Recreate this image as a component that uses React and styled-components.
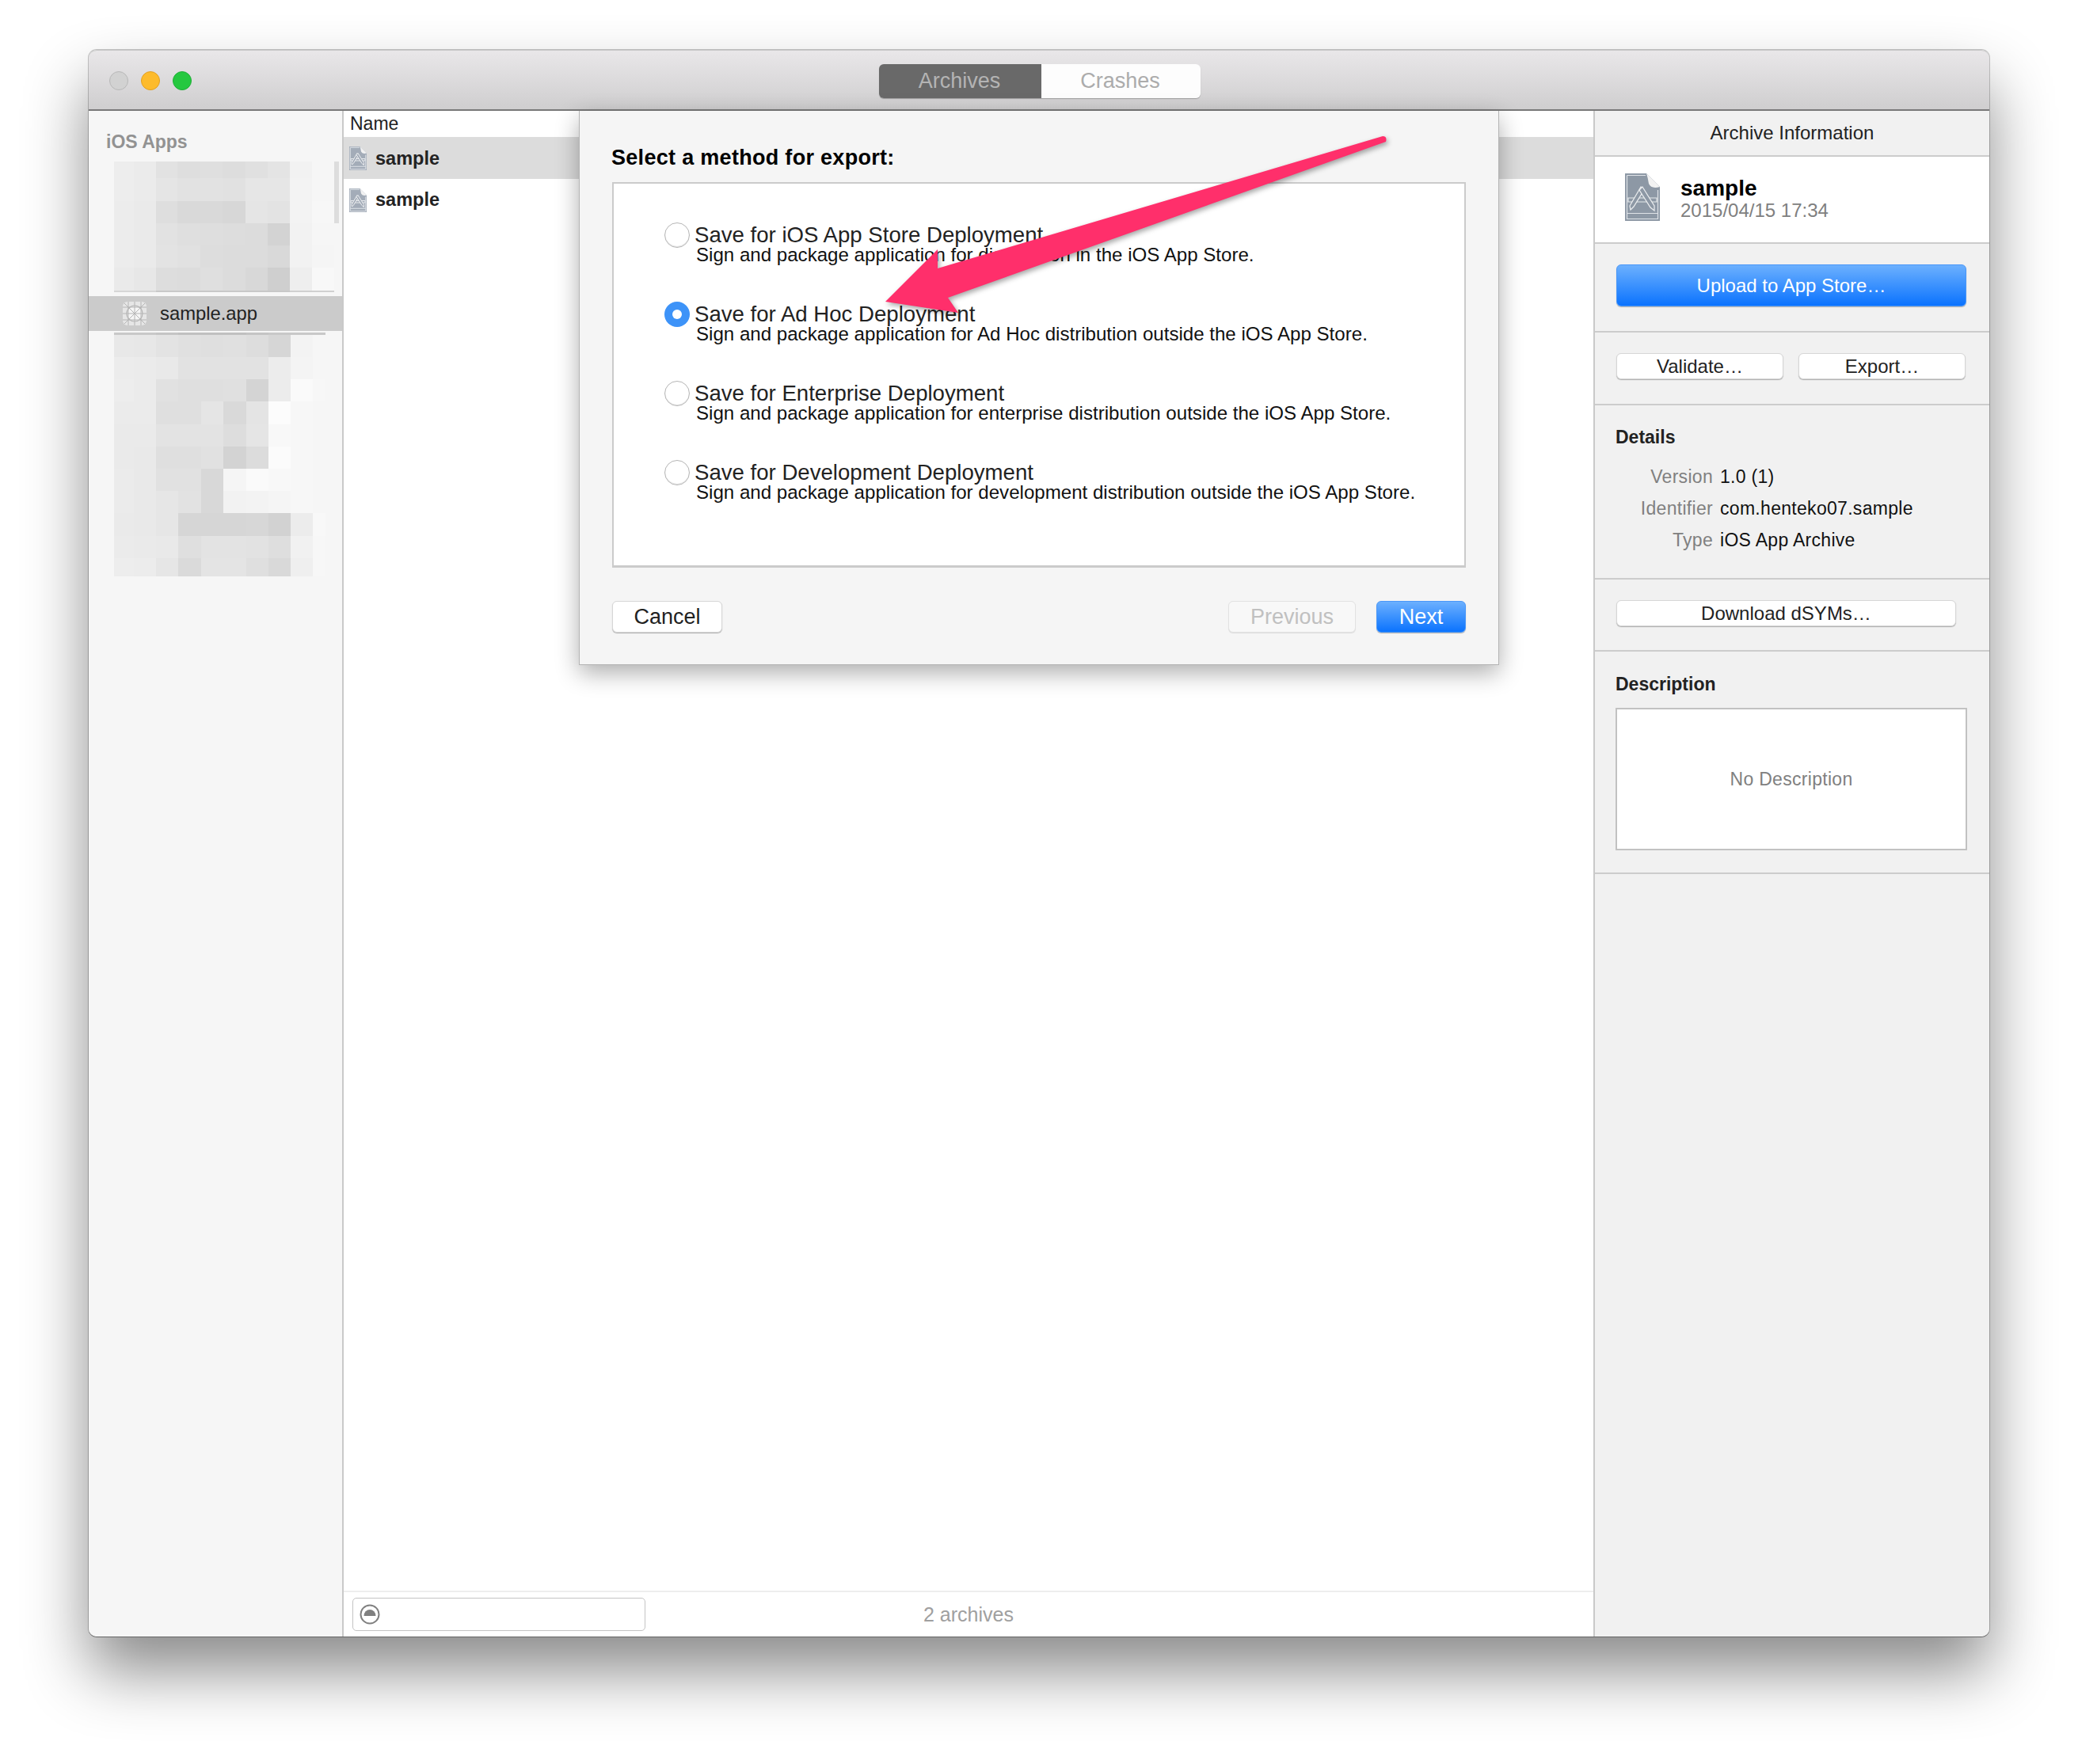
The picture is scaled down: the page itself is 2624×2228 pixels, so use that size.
import { Fragment } from "react";
import styled, { createGlobalStyle } from "styled-components";

const GlobalStyle = createGlobalStyle`
  html, body {
    margin: 0;
    background: #ffffff;
    font-family: "Liberation Sans", Arial, sans-serif;
    color: #222222;
  }
  * { box-sizing: border-box; }
`;

const Page = styled.div`
  width: 2624px;
  height: 2228px;
  padding: 63px 112px 0;
  overflow: hidden;
`;

const Window = styled.div`
  position: relative;
  height: 2004px;
  display: flex;
  flex-direction: column;
  border-radius: 10px;
  background: #ffffff;
  box-shadow: 0 1px 0 #666666, 0 0 0 1px rgba(0, 0, 0, 0.22), 0 44px 80px rgba(0, 0, 0, 0.46);
`;

const TitleBar = styled.div`
  position: relative;
  height: 77px;
  flex: none;
  display: flex;
  align-items: center;
  justify-content: center;
  background: linear-gradient(#e9e7e9, #cfcecf);
  border-top: 1px solid #c8c8c8;
  border-bottom: 2px solid #787878;
  border-radius: 10px 10px 0 0;
`;

const Lights = styled.div`
  position: absolute;
  left: 26px;
  top: 26px;
  display: flex;
  gap: 16px;
`;

const Light = styled.span`
  width: 24px;
  height: 24px;
  border-radius: 50%;
  background: ${(p) => p.$fill};
  border: 1px solid ${(p) => p.$edge};
`;

const Segments = styled.div`
  display: flex;
  height: 43px;
  margin: 2px 0 0 2px;
  border-radius: 6px;
  overflow: hidden;
  box-shadow: 0 1px 1px rgba(0, 0, 0, 0.25);
`;

const Segment = styled.div`
  width: ${(p) => p.$width}px;
  display: flex;
  align-items: center;
  justify-content: center;
  padding-right: 2px;
  font-size: 27px;
  color: ${(p) => (p.$active ? "#b4b4b4" : "#acacac")};
  background: ${(p) => (p.$active ? "#696969" : "#fdfdfd")};
`;

const Body = styled.div`
  flex: 1;
  display: flex;
  min-height: 0;
`;

const Sidebar = styled.aside`
  width: 322px;
  flex: none;
  background: #f6f6f6;
  border-right: 2px solid #c9c9c9;
  border-radius: 0 0 0 10px;
`;

const SidebarTitle = styled.div`
  height: 64px;
  padding: 25px 0 0 22px;
  font-size: 23px;
  line-height: 28px;
  font-weight: 700;
  color: #929292;
`;

const MosaicSvg = styled.svg`
  display: block;
  margin: ${(p) => p.$top || 0}px 0 0 32px;
  shape-rendering: crispEdges;
`;

const SelectedApp = styled.div`
  height: 44px;
  margin-top: ${(p) => p.$top}px;
  display: flex;
  align-items: center;
  gap: 16px;
  padding-left: 42px;
  background: #cbcbcb;
  font-size: 23.8px;
  color: #222222;
`;

const Main = styled.main`
  flex: 1;
  min-width: 0;
  display: flex;
  flex-direction: column;
`;

const ColumnHeader = styled.div`
  height: 33px;
  padding-left: 8px;
  font-size: 23px;
  line-height: 33px;
  color: #222222;
`;

const ArchiveRow = styled.div`
  height: ${(p) => p.$height}px;
  display: flex;
  align-items: center;
  gap: 11px;
  padding: 1px 0 0 7px;
  background: ${(p) => (p.$selected ? "#dcdcdc" : "#ffffff")};
  font-size: 23.5px;
  font-weight: 700;
  color: #222222;
`;

const Spacer = styled.div`
  flex: 1;
`;

const Footer = styled.div`
  position: relative;
  height: 58px;
  flex: none;
  display: flex;
  align-items: center;
  justify-content: center;
  border-top: 2px solid #eeeeee;
  font-size: 25px;
  color: #a0a0a0;
`;

const FilterField = styled.div`
  position: absolute;
  left: 11px;
  top: 7px;
  width: 370px;
  height: 42px;
  display: flex;
  align-items: center;
  padding-left: 8px;
  background: #ffffff;
  border: 1px solid #c4c4c4;
  border-radius: 5px;
`;

const Inspector = styled.aside`
  width: 500px;
  flex: none;
  background: #f1f1f1;
  border-left: 2px solid #c9c9c9;
  border-radius: 0 0 10px 0;
`;

const Section = styled.section`
  height: ${(p) => p.$height}px;
  padding: ${(p) => p.$padding || "0"};
  background: ${(p) => (p.$white ? "#ffffff" : "transparent")};
  border-bottom: 2px solid #cccccc;
`;

const InspectorTitle = styled.div`
  height: 100%;
  display: flex;
  align-items: center;
  justify-content: center;
  font-size: 24px;
  color: #222222;
`;

const ArchiveSummary = styled.div`
  display: flex;
  gap: 26px;
  padding: 21px 0 0 38px;
`;

const SummaryText = styled.div`
  padding-top: 3px;
`;

const SummaryName = styled.div`
  font-size: 28px;
  line-height: 32px;
  font-weight: 700;
  color: #000000;
`;

const SummaryDate = styled.div`
  font-size: 24px;
  line-height: 24px;
  color: #808080;
`;

const PushButton = styled.div`
  width: ${(p) => p.$width}px;
  height: ${(p) => p.$height}px;
  display: flex;
  align-items: center;
  justify-content: center;
  padding-top: 1px;
  border-radius: 6px;
  font-size: ${(p) => p.$size || 24}px;
  color: #222222;
  background: #ffffff;
  border: 1px solid #d6d6d6;
  box-shadow: 0 1px 1px rgba(0, 0, 0, 0.28);
`;

const PrimaryButton = styled(PushButton)`
  color: #ffffff;
  background: linear-gradient(#6cb0fe, #0b73fe);
  border: 1px solid #4a97f8;
`;

const DisabledButton = styled(PushButton)`
  color: #c0c0c0;
  background: #f8f8f8;
  border-color: #e2e2e2;
  box-shadow: 0 1px 1px rgba(0, 0, 0, 0.1);
`;

const ButtonRow = styled.div`
  display: flex;
  gap: 19px;
`;

const SectionHeading = styled.div`
  font-size: 23px;
  line-height: 28px;
  font-weight: 700;
  color: #222222;
`;

const DetailGrid = styled.dl`
  margin: 22px 0 0 -26px;
  display: grid;
  grid-template-columns: 149px 1fr;
  column-gap: 9px;
  row-gap: 11.5px;
  font-size: 23px;
  line-height: 28.5px;
  letter-spacing: 0.3px;
`;

const DetailLabel = styled.dt`
  text-align: right;
  color: #808080;
`;

const DetailValue = styled.dd`
  margin: 0;
  color: #111111;
`;

const DescriptionBox = styled.div`
  height: 180px;
  margin-top: 16px;
  display: flex;
  align-items: center;
  justify-content: center;
  background: #ffffff;
  border: 2px solid #c2c2c2;
  font-size: 23px;
  letter-spacing: 0.3px;
  color: #808080;
`;

const Sheet = styled.div`
  position: absolute;
  left: 619px;
  top: 77px;
  width: 1162px;
  height: 700px;
  padding: 0 41px 0 41px;
  background: #f5f5f5;
  border: 1px solid #b4b4b4;
  border-top: none;
  box-shadow: 0 10px 28px rgba(0, 0, 0, 0.32);
`;

const SheetTitle = styled.div`
  height: 90px;
  margin-left: -1px;
  padding-top: 42px;
  font-size: 27px;
  line-height: 34px;
  letter-spacing: 0.3px;
  font-weight: 700;
  color: #000000;
`;

const OptionBox = styled.div`
  height: 487px;
  padding: 49px 0 0 64px;
  background: #ffffff;
  border: 2px solid #cbcbcb;
  border-bottom-width: 3px;
`;

const Option = styled.div`
  height: 100px;
  display: grid;
  grid-template-columns: 31px 1fr;
  grid-template-rows: 32px auto;
`;

const Radio = styled.span`
  width: 32px;
  height: 32px;
  display: flex;
  align-items: center;
  justify-content: center;
  border-radius: 50%;
  background: ${(p) => (p.$checked ? "#3d93f8" : "#ffffff")};
  border: ${(p) => (p.$checked ? "none" : "1px solid #b5b5b5")};
  box-shadow: ${(p) => (p.$checked ? "none" : "inset 0 -1px 1px rgba(0,0,0,.12)")};

  &::after {
    content: "";
    width: 12px;
    height: 12px;
    border-radius: 50%;
    background: ${(p) => (p.$checked ? "#ffffff" : "transparent")};
  }
`;

const OptionTitle = styled.div`
  margin-left: 7px;
  font-size: 27.6px;
  line-height: 32px;
  color: #222222;
`;

const OptionText = styled.div`
  grid-column: 2;
  margin: -1px 0 0 9px;
  font-size: 24.1px;
  line-height: 20px;
  color: #111111;
`;

const SheetButtons = styled.div`
  margin-top: 42px;
  display: flex;
  justify-content: space-between;
`;

const SheetNav = styled.div`
  display: flex;
  gap: 26px;
`;

const Arrow = styled.svg`
  position: absolute;
  left: 998px;
  top: 100px;
  filter: drop-shadow(2px 3px 3px rgba(0, 0, 0, 0.35));
`;

const upperMosaic = {
  cols: [25, 28, 27, 29, 28, 29, 28, 28, 28, 28, 6],
  rows: [21, 29, 28, 28, 28, 29, 2],
  cells: [
    ["ed", "eb", "e2", "de", "df", "dd", "e0", "e4", "f2", "f6", "dd"],
    ["ed", "eb", "e5", "e2", "e2", "e1", "e6", "e6", "f3", "f6", "dd"],
    ["ec", "ea", "de", "d9", "d9", "d7", "e5", "e3", "f3", "f7", "dd"],
    ["ec", "ea", "e2", "df", "de", "dd", "dc", "d3", "f2", "f6", "f6"],
    ["ec", "ea", "e3", "e1", "dd", "dc", "dc", "d9", "f2", "f5", "f6"],
    ["ea", "e7", "dd", "dc", "df", "dc", "d8", "cf", "ee", "f8", "f6"],
    ["d6", "d6", "c8", "c8", "c8", "c8", "c8", "c8", "d0", "d0", "f6"],
  ],
};

const lowerMosaic = {
  cols: [25, 28, 28, 29, 28, 29, 28, 28, 28, 16],
  rows: [3, 28, 28, 28, 29, 28, 28, 28, 28, 29, 28, 23],
  cells: [
    ["c8", "c8", "c4", "c0", "c0", "c0", "c4", "c8", "c8", "c8"],
    ["e8", "e7", "e3", "e0", "df", "e0", "dd", "d6", "f3", "f6"],
    ["ec", "eb", "e9", "e2", "e2", "e2", "e2", "ec", "f4", "f6"],
    ["ed", "eb", "e1", "df", "df", "e0", "d4", "ec", "fa", "f7"],
    ["eb", "eb", "df", "df", "e5", "d9", "e4", "fc", "f7", "f6"],
    ["ea", "ea", "e3", "e3", "e3", "dd", "e5", "f8", "f7", "f6"],
    ["ea", "e9", "df", "df", "e1", "d3", "dc", "fb", "f7", "f6"],
    ["eb", "e9", "e1", "e1", "d8", "f5", "fa", "f8", "f7", "f6"],
    ["eb", "e9", "e6", "e2", "d8", "f2", "f3", "f5", "f7", "f6"],
    ["ea", "e9", "e6", "d6", "d6", "d6", "d7", "d2", "ec", "f8"],
    ["eb", "ea", "e9", "df", "e3", "e3", "e2", "de", "f1", "f7"],
    ["ed", "ec", "e6", "da", "e4", "e4", "df", "d9", "ef", "f7"],
  ],
};

// the blurred-out list of other apps in the sidebar
function Mosaic({ cols, rows, cells, top }) {
  const sum = (list, n) => list.slice(0, n).reduce((a, b) => a + b, 0);
  return (
    <MosaicSvg $top={top} width={sum(cols)} height={sum(rows)}>
      {cells.map((row, r) =>
        row.map((c, i) => (
          <rect
            key={`${r}-${i}`}
            x={sum(cols, i)}
            y={sum(rows, r)}
            width={cols[i]}
            height={rows[r]}
            fill={`#${c}${c}${c}`}
          />
        ))
      )}
    </MosaicSvg>
  );
}

function ArchiveIcon({ width, height, fill = "#8d98a5", line = 1.2 }) {
  return (
    <svg width={width} height={height} viewBox="0 0 44 60">
      <path d="M0 0H27L44 17V60H0Z" fill={fill} />
      <path d="M2.5 2.5H26M2.5 2.5V57.5H41.5V21M2.5 50.5H41.5" fill="none" stroke="#dfe3e8" strokeWidth={line} />
      <path d="M27 0L44 17Q33 20 30 13Q29 6 27 0Z" fill="#f2f2f2" />
      <path d="M4 31H40V36H4Z" fill="none" stroke="#e6e9ec" strokeWidth={line} />
      <path d="M20 17L6 41L7 46L11 42L24 21Z" fill={fill} stroke="#eceef0" strokeWidth={line} />
      <path d="M22 17L37 41L37 47L32 43L18 21Z" fill={fill} stroke="#eceef0" strokeWidth={line} />
    </svg>
  );
}

function AppIcon() {
  return (
    <svg width="32" height="32" viewBox="0 0 32 32">
      <rect x="1" y="1" width="30" height="30" rx="6" fill="#e6e6e6" />
      <circle cx="16" cy="16" r="10" fill="#f6f6f6" stroke="#b4b4b4" strokeWidth="1.2" />
      <path
        d="M1 8H31M1 24H31M8 1V31M24 1V31M1 16H31M16 1V31M3 3L29 29M29 3L3 29"
        fill="none"
        stroke="#b4b4b4"
        strokeWidth="1"
      />
    </svg>
  );
}

function FilterIcon() {
  return (
    <svg width="26" height="26" viewBox="0 0 26 26">
      <circle cx="13" cy="13" r="11.5" fill="none" stroke="#808080" strokeWidth="2" />
      <path d="M5.5 15A7.5 8 0 0 1 20.5 15Z" fill="#808080" />
    </svg>
  );
}

const options = [
  {
    title: "Save for iOS App Store Deployment",
    text: "Sign and package application for distribution in the iOS App Store.",
  },
  {
    title: "Save for Ad Hoc Deployment",
    text: "Sign and package application for Ad Hoc distribution outside the iOS App Store.",
    checked: true,
  },
  {
    title: "Save for Enterprise Deployment",
    text: "Sign and package application for enterprise distribution outside the iOS App Store.",
  },
  {
    title: "Save for Development Deployment",
    text: "Sign and package application for development distribution outside the iOS App Store.",
  },
];

const details = [
  ["Version", "1.0 (1)"],
  ["Identifier", "com.henteko07.sample"],
  ["Type", "iOS App Archive"],
];

export default function App() {
  return (
    <Page>
      <GlobalStyle />
      <Window>
        <TitleBar>
          <Lights>
            <Light $fill="#d2d2d2" $edge="#b8b8b8" />
            <Light $fill="#fdbb2c" $edge="#e3a020" />
            <Light $fill="#25c83f" $edge="#1fae36" />
          </Lights>
          <Segments>
            <Segment $active $width={205}>Archives</Segment>
            <Segment $width={201}>Crashes</Segment>
          </Segments>
        </TitleBar>

        <Body>
          <Sidebar>
            <SidebarTitle>iOS Apps</SidebarTitle>
            <Mosaic {...upperMosaic} />
            <SelectedApp $top={5}>
              <AppIcon />
              sample.app
            </SelectedApp>
            <Mosaic {...lowerMosaic} top={2} />
          </Sidebar>

          <Main>
            <ColumnHeader>Name</ColumnHeader>
            <ArchiveRow $selected $height={53}>
              <ArchiveIcon width={22} height={30} fill="#a3acb8" line={2} />
              sample
            </ArchiveRow>
            <ArchiveRow $height={52}>
              <ArchiveIcon width={22} height={30} fill="#a3acb8" line={2} />
              sample
            </ArchiveRow>
            <Spacer />
            <Footer>
              <FilterField>
                <FilterIcon />
              </FilterField>
              2 archives
            </Footer>
          </Main>

          <Inspector>
            <Section $height={58}>
              <InspectorTitle>Archive Information</InspectorTitle>
            </Section>
            <Section $height={110} $white>
              <ArchiveSummary>
                <ArchiveIcon width={44} height={60} />
                <SummaryText>
                  <SummaryName>sample</SummaryName>
                  <SummaryDate>2015/04/15 17:34</SummaryDate>
                </SummaryText>
              </ArchiveSummary>
            </Section>
            <Section $height={112} $padding="26px 0 0 27px">
              <PrimaryButton $width={442} $height={53}>Upload to App Store…</PrimaryButton>
            </Section>
            <Section $height={92} $padding="26px 0 0 27px">
              <ButtonRow>
                <PushButton $width={211} $height={33}>Validate…</PushButton>
                <PushButton $width={211} $height={33}>Export…</PushButton>
              </ButtonRow>
            </Section>
            <Section $height={220} $padding="26px 0 0 26px">
              <SectionHeading>Details</SectionHeading>
              <DetailGrid>
                {details.map(([label, value]) => (
                  <Fragment key={label}>
                    <DetailLabel>{label}</DetailLabel>
                    <DetailValue>{value}</DetailValue>
                  </Fragment>
                ))}
              </DetailGrid>
            </Section>
            <Section $height={91} $padding="26px 0 0 27px">
              <PushButton $width={429} $height={33}>Download dSYMs…</PushButton>
            </Section>
            <Section $height={281} $padding="27px 28px 0 26px">
              <SectionHeading>Description</SectionHeading>
              <DescriptionBox>No Description</DescriptionBox>
            </Section>
          </Inspector>
        </Body>

        <Sheet>
          <SheetTitle>Select a method for export:</SheetTitle>
          <OptionBox>
            {options.map((o) => (
              <Option key={o.title}>
                <Radio $checked={o.checked} />
                <OptionTitle>{o.title}</OptionTitle>
                <OptionText>{o.text}</OptionText>
              </Option>
            ))}
          </OptionBox>
          <SheetButtons>
            <PushButton $width={139} $height={40} $size={27}>Cancel</PushButton>
            <SheetNav>
              <DisabledButton $width={161} $height={40} $size={27}>Previous</DisabledButton>
              <PrimaryButton $width={113} $height={40} $size={27}>Next</PrimaryButton>
            </SheetNav>
          </SheetButtons>
        </Sheet>

        <Arrow width="660" height="240" viewBox="1110 163 660 240">
          <path
            d="M1118 381L1184 315L1184 339L1746 172Q1752 172 1750 179L1197 376L1210 395Z"
            fill="#ff2f6b"
          />
        </Arrow>
      </Window>
    </Page>
  );
}
